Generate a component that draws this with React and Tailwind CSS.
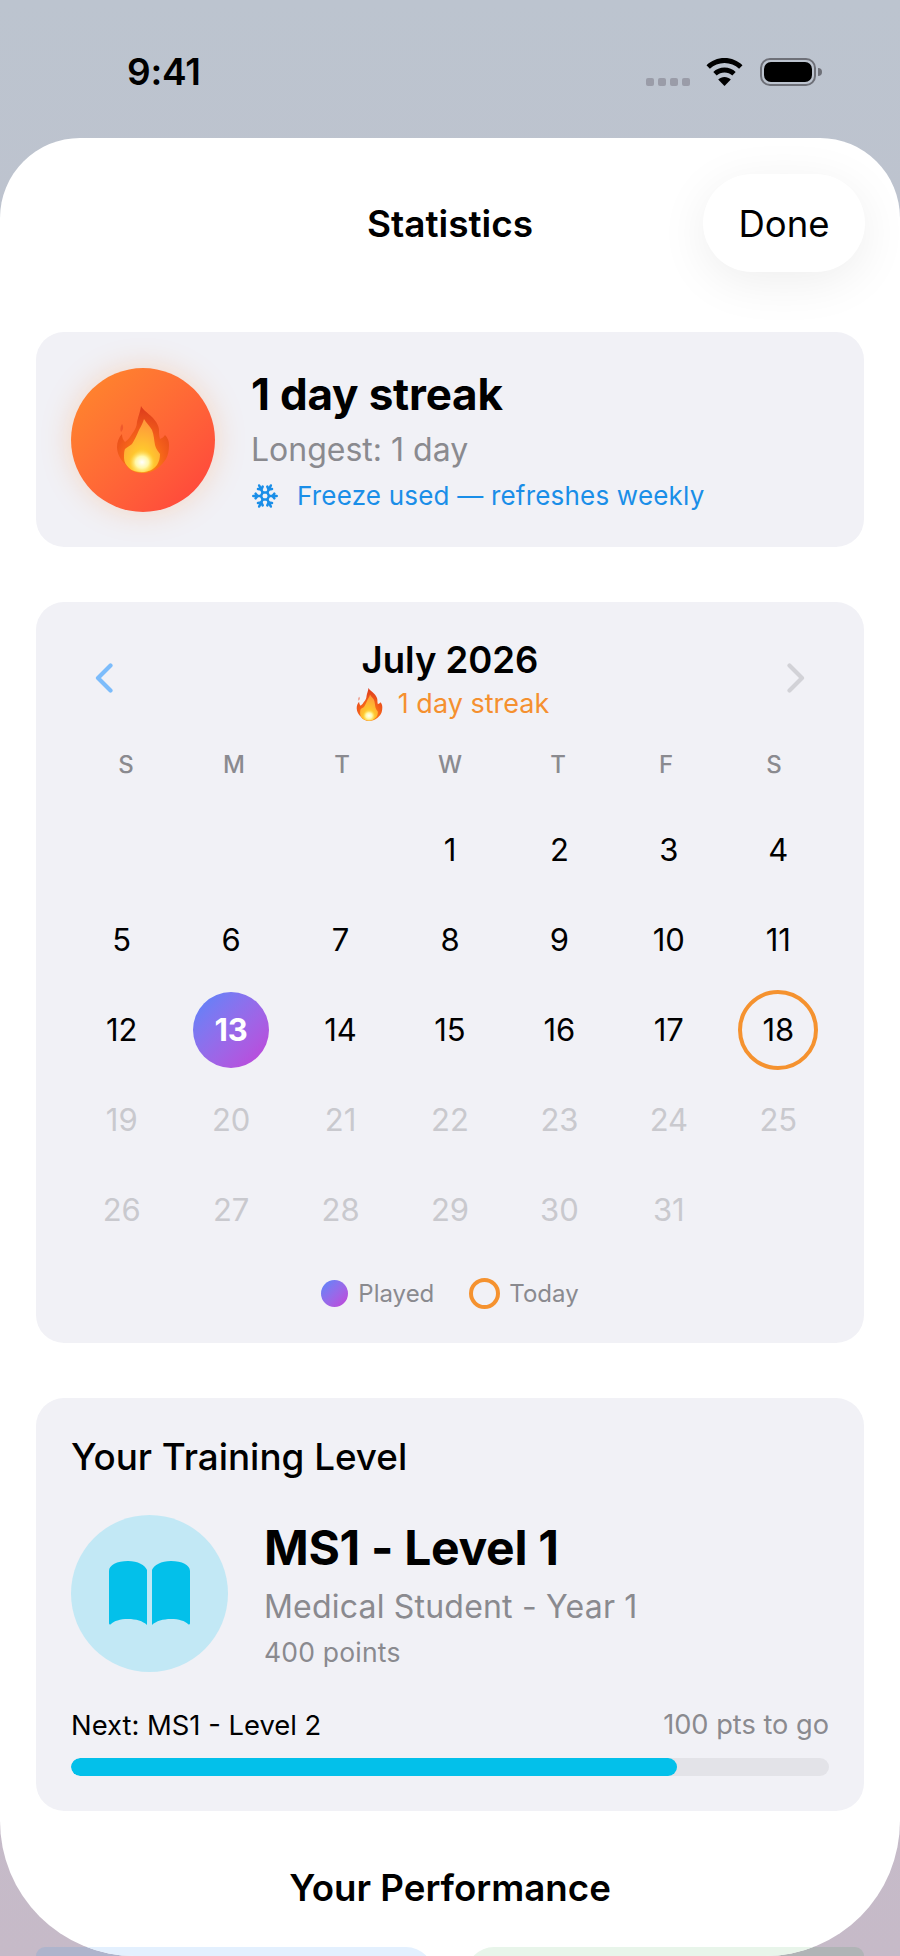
import { Snowflake } from 'lucide-react'

const weeks = [
  [null, null, null, 1, 2, 3, 4],
  [5, 6, 7, 8, 9, 10, 11],
  [12, 13, 14, 15, 16, 17, 18],
  [19, 20, 21, 22, 23, 24, 25],
  [26, 27, 28, 29, 30, 31, null],
]

function Flame({ className }) {
  return (
    <svg viewBox="0 0 52 67" className={className}>
      <defs>
        <radialGradient id="flameOuter" cx="50%" cy="85%" r="85%">
          <stop offset="0%" stopColor="#ff9d0a" />
          <stop offset="50%" stopColor="#f4601a" />
          <stop offset="100%" stopColor="#dc3a1c" />
        </radialGradient>
        <radialGradient id="flameInner" cx="50%" cy="88%" r="80%">
          <stop offset="0%" stopColor="#fff08a" />
          <stop offset="40%" stopColor="#ffc62e" />
          <stop offset="100%" stopColor="#ff9a3a" />
        </radialGradient>
        <radialGradient id="flameCore" cx="50%" cy="55%" r="50%">
          <stop offset="0%" stopColor="#ffffff" />
          <stop offset="50%" stopColor="#fff8a8" />
          <stop offset="100%" stopColor="#ffd23a" stopOpacity="0" />
        </radialGradient>
      </defs>
      <path d="M5 18c-2 3-2 6-1 8 2-2 3-5 1-8z" fill="#e8502a" opacity=".7" />
      <path d="M24 0c2 4 7 7 11 11 4 4 7 9 7 13 0 3 0 6 1 9 2-1 4-2 5-4 3 3 4 6 4 10 0 6-1 10-3 14-4 6-11 14-24 14-7 0-13-3-17-9-4-4-8-10-8-17 0-5 2-10 5-13 0 3 1 6 3 8 3-2 5-5 7-8 3-4 5-8 5-12 1-5 3-9 4-16z" fill="url(#flameOuter)" />
      <path d="M27 13c2 4 6 7 8 11 2 5 2 10 3 15 1 4 3 6 5 9 0 4-1 8-3 11-4 5-9 7-15 7-5 0-10-1-13-4-3-3-5-6-5-10 0-4 0-7 1-9 2-2 5-3 7-5 2-3 4-7 7-14 2-4 4-7 5-11z" fill="url(#flameInner)" />
      <ellipse cx="25" cy="55" rx="13" ry="12" fill="url(#flameCore)" />
    </svg>
  )
}

function StatusBar() {
  return (
    <div className="flex h-[138px] items-start justify-between pl-[127px] pr-[78px] pt-[51px]">
      <span className="text-[37px] leading-[42px] font-semibold tracking-[-0.2px] text-black">9:41</span>
      <div className="flex items-center pt-[7px]">
        <div className="mt-[20px] flex gap-[4px]">
          {[0, 1, 2, 3].map(i => (
            <span key={i} className="h-[8px] w-[8px] rounded-[2px] bg-[#9a9ca8]" />
          ))}
        </div>
        <svg viewBox="1 0 36 28" className="ml-[16px] h-[28px] w-[37px]">
          <path d="M19 0C12 0 5.800 2.700 1 7.200l3.400 3.600C8.300 7.200 13.400 5 19 5s10.700 2.200 14.600 5.800L37 7.200C32.200 2.700 26 0 19 0z" fill="#000" />
          <path d="M19 9.500c-4.300 0-8.300 1.700-11.200 4.400l3.400 3.600C13.300 15.600 16 14.500 19 14.500s5.700 1.100 7.800 3l3.400-3.600c-2.900-2.700-6.900-4.400-11.200-4.400z" fill="#000" />
          <path d="M19 19c-2.400 0-4.600.9-6.300 2.500L19 28l6.300-6.500C23.600 19.900 21.400 19 19 19z" fill="#000" />
        </svg>
        <div className="ml-[17px] flex items-center">
          <div className="flex h-[28px] w-[56px] items-center justify-center rounded-[10px] border-[2px] border-[#6e7078]">
            <div className="h-[20px] w-[48px] rounded-[7px] bg-black" />
          </div>
          <div className="ml-[2px] h-[8px] w-[4px] rounded-r-full bg-[#6e7078]" />
        </div>
      </div>
    </div>
  )
}

function StreakCard() {
  return (
    <div className="flex h-[215px] items-center rounded-[28px] bg-[#f1f1f6] pl-[35px]">
      <div className="flex h-[144px] w-[144px] shrink-0 items-center justify-center rounded-full bg-gradient-to-br from-[#ff8a2a] to-[#ff3d3d] shadow-[0_0_30px_rgba(255,130,40,0.25)]">
        <Flame className="h-[67px] w-[52px]" />
      </div>
      <div className="ml-[36px] flex flex-col pt-[4px]">
        <div className="text-[44px] leading-[50px] font-bold tracking-[-0.2px] text-black">1 day streak</div>
        <div className="mt-[13px] text-[32px] leading-[36px] text-[#8a8a8f]">Longest: 1 day</div>
        <div className="mt-[10px] flex items-center text-[#1a8ee8]">
          <Snowflake size={28} strokeWidth={2.2} />
          <span className="ml-[18px] text-[26px] leading-[36px] tracking-[0.2px]">Freeze used — refreshes weekly</span>
        </div>
      </div>
    </div>
  )
}

function CalendarCard() {
  return (
    <div className="mt-[55px] h-[741px] rounded-[28px] bg-[#f1f1f6] px-[36px]">
      <div className="flex items-center justify-between pt-[37px]">
        <svg viewBox="0 0 18 30" className="ml-[23px] mt-[-4px] h-[30px] w-[18px]" fill="none" stroke="#7cbcfb" strokeWidth="4.200" strokeLinecap="round" strokeLinejoin="round">
          <path d="M15.500 2.500 3 15l12.500 12.500" />
        </svg>
        <div className="flex flex-col items-center">
          <span className="text-[36.500px] leading-[42px] font-semibold text-black">July 2026</span>
          <div className="mt-[6px] flex items-center pl-[5px]">
            <Flame className="h-[33px] w-[27px]" />
            <span className="ml-[15px] text-[27px] leading-[34px] text-[#f5902f]">1 day streak</span>
          </div>
        </div>
        <svg viewBox="0 0 18 30" className="mr-[23px] mt-[-4px] h-[30px] w-[18px]" fill="none" stroke="#d2d2d7" strokeWidth="4.200" strokeLinecap="round" strokeLinejoin="round">
          <path d="M2.500 2.500 15 15 2.500 27.500" />
        </svg>
      </div>
      <div className="mt-[30px] grid grid-cols-7">
        {['S', 'M', 'T', 'W', 'T', 'F', 'S'].map((d, i) => (
          <span key={i} className="text-center text-[24px] leading-[28px] font-medium text-[#8a8a8f]">{d}</span>
        ))}
      </div>
      <div className="-mx-[5px] mt-[30px] flex flex-col gap-[8px]">
        {weeks.map((week, w) => (
          <div key={w} className="grid h-[82px] grid-cols-7">
            {week.map((n, i) => (
              <div key={i} className="flex items-center justify-center">
                {n === 13 ? (
                  <span className="flex h-[76px] w-[76px] items-center justify-center rounded-full bg-gradient-to-br from-[#4f86fb] to-[#c23fd8] text-[31px] font-bold text-white">13</span>
                ) : n === 18 ? (
                  <span className="flex h-[80px] w-[80px] items-center justify-center rounded-full border-[4px] border-[#f5922f] text-[31px] text-black">18</span>
                ) : n ? (
                  <span className={n >= 19 ? 'text-[31px] text-[#c9c9ce]' : 'text-[31px] text-black'}>{n}</span>
                ) : null}
              </div>
            ))}
          </div>
        ))}
      </div>
      <div className="mt-[27px] flex items-center justify-center">
        <span className="h-[27px] w-[27px] rounded-full bg-gradient-to-br from-[#4f86fb] to-[#c23fd8]" />
        <span className="ml-[10px] text-[24px] leading-[30px] text-[#8a8a8f]">Played</span>
        <span className="ml-[35px] h-[31px] w-[31px] rounded-full border-[4px] border-[#f5922f]" />
        <span className="ml-[9px] text-[24px] leading-[30px] text-[#8a8a8f]">Today</span>
      </div>
    </div>
  )
}

function LevelCard() {
  return (
    <div className="mt-[55px] h-[413px] rounded-[28px] bg-[#f1f1f6] px-[35px]">
      <div className="pt-[37px] text-[36.800px] leading-[44px] font-medium text-black">Your Training Level</div>
      <div className="mt-[36px] flex items-center">
        <div className="flex h-[157px] w-[157px] shrink-0 items-center justify-center rounded-full bg-[#c2e8f5]">
          <svg viewBox="0 0 81 65" className="h-[65px] w-[81px]" fill="#03c0ea">
            <path d="M0 10C0 4 8 0 19 0c10 0 17 4 19 9v55c-4-4-11-6-19-6-8 0-14 2-17 5-1 1-2 .5-2-1z" />
            <path d="M81 10c0-6-8-10-19-10-10 0-17 4-19 9v55c4-4 11-6 19-6 8 0 14 2 17 5 1 1 2 .5 2-1z" />
          </svg>
        </div>
        <div className="ml-[36px] flex flex-col">
          <div className="text-[48px] leading-[56px] font-bold tracking-[-0.3px] text-black">MS1 - Level 1</div>
          <div className="mt-[12px] text-[32px] leading-[38px] tracking-[0.2px] text-[#8a8a8f]">Medical Student - Year 1</div>
          <div className="mt-[10px] text-[26.500px] leading-[32px] tracking-[0.2px] text-[#8a8a8f]">400 points</div>
        </div>
      </div>
      <div className="mt-[36px] flex items-center justify-between">
        <span className="text-[27.400px] leading-[34px] text-black">Next: MS1 - Level 2</span>
        <span className="text-[27.200px] leading-[34px] text-[#8a8a8f]">100 pts to go</span>
      </div>
      <div className="mt-[16px] h-[18px] overflow-hidden rounded-full bg-[#e3e3e8]">
        <div className="h-full w-[80%] rounded-full bg-[#03c0ea]" />
      </div>
    </div>
  )
}

export default function App() {
  return (
    <div className="relative h-[1956px] w-[900px] overflow-hidden bg-gradient-to-b from-[#bcc4cf] to-[#c6bac8] font-['Inter','Noto_Sans',sans-serif]">
      <StatusBar />
      {/* cards peek out past the sheet's rounded bottom, dimmed by the backdrop */}
      <div className="absolute bottom-0 left-[36px] h-[9px] w-[398px] rounded-t-[24px] bg-[#aeb4cc]" />
      <div className="absolute bottom-0 left-[466px] h-[9px] w-[398px] rounded-t-[24px] bg-[#b0b4b6]" />
      <div className="relative h-[1818px] overflow-hidden rounded-t-[80px] rounded-b-[135px] bg-white">
        <div className="relative h-[194px]">
          <div className="pt-[58px] text-center text-[37px] leading-[56px] font-semibold text-black">Statistics</div>
          <div className="absolute right-[35px] top-[36px] flex h-[98px] w-[162px] items-center justify-center rounded-[49px] bg-white pt-[2px] text-[36.500px] text-black shadow-[0_10px_50px_rgba(0,0,0,0.07)]">Done</div>
        </div>
        <div className="px-[36px]">
          <StreakCard />
          <CalendarCard />
          <LevelCard />
          <div className="mt-[55px] text-center text-[36.700px] leading-[44px] font-semibold text-black">Your Performance</div>
          <div className="mt-[37px] grid grid-cols-2 gap-[32px]">
            <div className="h-[100px] rounded-[28px] bg-[#e3f0fe]" />
            <div className="h-[100px] rounded-[28px] bg-[#e8f5ea]" />
          </div>
        </div>
      </div>
    </div>
  )
}
